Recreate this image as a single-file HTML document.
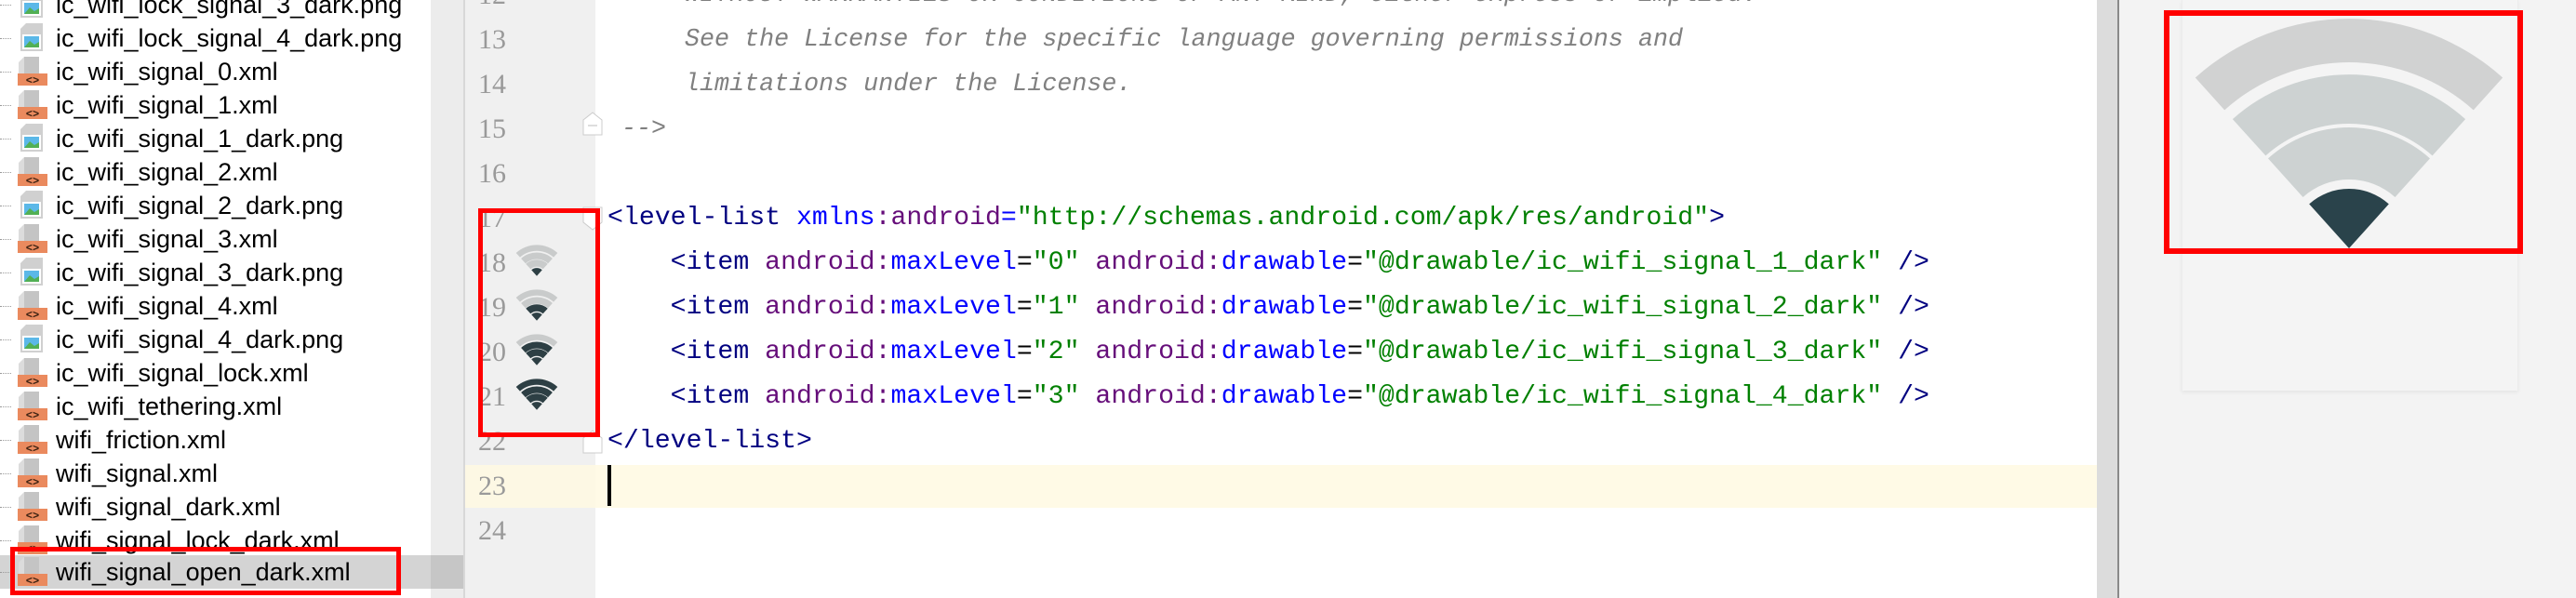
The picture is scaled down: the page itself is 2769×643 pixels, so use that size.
<!DOCTYPE html>
<html><head><meta charset="utf-8"><style>
*{margin:0;padding:0;box-sizing:border-box}
body{width:2769px;height:643px;overflow:hidden;background:#fff;position:relative;font-family:"Liberation Sans","Noto Sans CJK SC",sans-serif}
.a{position:absolute}
.row{position:absolute;left:0;width:463px;height:36px}
.row .t{position:absolute;left:60px;top:0;line-height:36px;font-size:27px;color:#000;white-space:nowrap}
.row .d{position:absolute;left:0;top:18px;width:12px;border-top:1px dotted #999}
.row svg{position:absolute;left:18px;top:2px}
.ln{position:absolute;left:500px;width:44px;text-align:right;font-family:"Liberation Serif",serif;font-size:30px;color:#9a9a9a;height:48px;line-height:48px}
.code{position:absolute;left:653px;height:48px;line-height:48px;font-family:"Liberation Mono",monospace;font-size:28.2px;white-space:pre;color:#000}
.c{color:#808080;font-style:italic;font-size:26.7px}
.tg{color:#000080}.an{color:#0000ff}.ns{color:#660e7a}.v{color:#008000}
</style></head><body>
<svg width="0" height="0" style="position:absolute"><defs>
<symbol id="xi" viewBox="0 0 34 32"><path d="M8 0H24V18H8Z" fill="#c4c4c4"/><path d="M8 0L2 6V18H8Z" fill="#dcdcdc"/><rect x="1" y="18" width="32" height="13" fill="#ea8a5e"/><text x="17" y="29" font-size="12" font-family="Liberation Mono" text-anchor="middle" fill="#3a2010" font-weight="bold">&lt;&gt;</text></symbol>
<symbol id="pi" viewBox="0 0 34 32"><path d="M10 0H28V30H4V6Z" fill="#d0d0d0"/><rect x="6" y="12" width="20" height="16" fill="#fff"/><rect x="8" y="14" width="16" height="12" fill="#5bb8e8"/><path d="M8 26L14 19L19 23L24 20V26Z" fill="#52b054"/></symbol>
</defs></svg>

<div class="a" style="left:0;top:597px;width:463px;height:36px;background:#d4d4d4"></div>
<div class="a" style="left:463px;top:0;width:37px;height:643px;background:#ececec"></div>
<div class="a" style="left:463px;top:597px;width:37px;height:36px;background:#c6c6c6"></div>
<div class="a" style="left:498px;top:0;width:2px;height:643px;background:#d8d8d8"></div>

<div class="row" style="top:-13px"><div class="d"></div><svg width="34" height="32"><use href="#pi"/></svg><div class="t">ic_wifi_lock_signal_3_dark.png</div></div>
<div class="row" style="top:23px"><div class="d"></div><svg width="34" height="32"><use href="#pi"/></svg><div class="t">ic_wifi_lock_signal_4_dark.png</div></div>
<div class="row" style="top:59px"><div class="d"></div><svg width="34" height="32"><use href="#xi"/></svg><div class="t">ic_wifi_signal_0.xml</div></div>
<div class="row" style="top:95px"><div class="d"></div><svg width="34" height="32"><use href="#xi"/></svg><div class="t">ic_wifi_signal_1.xml</div></div>
<div class="row" style="top:131px"><div class="d"></div><svg width="34" height="32"><use href="#pi"/></svg><div class="t">ic_wifi_signal_1_dark.png</div></div>
<div class="row" style="top:167px"><div class="d"></div><svg width="34" height="32"><use href="#xi"/></svg><div class="t">ic_wifi_signal_2.xml</div></div>
<div class="row" style="top:203px"><div class="d"></div><svg width="34" height="32"><use href="#pi"/></svg><div class="t">ic_wifi_signal_2_dark.png</div></div>
<div class="row" style="top:239px"><div class="d"></div><svg width="34" height="32"><use href="#xi"/></svg><div class="t">ic_wifi_signal_3.xml</div></div>
<div class="row" style="top:275px"><div class="d"></div><svg width="34" height="32"><use href="#pi"/></svg><div class="t">ic_wifi_signal_3_dark.png</div></div>
<div class="row" style="top:311px"><div class="d"></div><svg width="34" height="32"><use href="#xi"/></svg><div class="t">ic_wifi_signal_4.xml</div></div>
<div class="row" style="top:347px"><div class="d"></div><svg width="34" height="32"><use href="#pi"/></svg><div class="t">ic_wifi_signal_4_dark.png</div></div>
<div class="row" style="top:383px"><div class="d"></div><svg width="34" height="32"><use href="#xi"/></svg><div class="t">ic_wifi_signal_lock.xml</div></div>
<div class="row" style="top:419px"><div class="d"></div><svg width="34" height="32"><use href="#xi"/></svg><div class="t">ic_wifi_tethering.xml</div></div>
<div class="row" style="top:455px"><div class="d"></div><svg width="34" height="32"><use href="#xi"/></svg><div class="t">wifi_friction.xml</div></div>
<div class="row" style="top:491px"><div class="d"></div><svg width="34" height="32"><use href="#xi"/></svg><div class="t">wifi_signal.xml</div></div>
<div class="row" style="top:527px"><div class="d"></div><svg width="34" height="32"><use href="#xi"/></svg><div class="t">wifi_signal_dark.xml</div></div>
<div class="row" style="top:563px"><div class="d"></div><svg width="34" height="32"><use href="#xi"/></svg><div class="t">wifi_signal_lock_dark.xml</div></div>
<div class="row" style="top:597px"><div class="d"></div><svg width="34" height="32"><use href="#xi"/></svg><div class="t">wifi_signal_open_dark.xml</div></div>
<div class="a" style="left:11px;top:588px;width:420px;height:52px;border:5px solid #f00"></div>

<div class="a" style="left:500px;top:0;width:140px;height:643px;background:#f0f0f0"></div>
<div class="a" style="left:500px;top:500px;width:140px;height:46px;background:#fdf8e4"></div>
<div class="a" style="left:640px;top:500px;width:1635px;height:46px;background:#fffae6"></div>
<div class="a" style="left:2275px;top:0;width:1px;height:643px;background:#eee"></div>

<div class="ln" style="top:-29px">12</div>
<div class="ln" style="top:19px">13</div>
<div class="ln" style="top:67px">14</div>
<div class="ln" style="top:115px">15</div>
<div class="ln" style="top:163px">16</div>
<div class="ln" style="top:211px">17</div>
<div class="ln" style="top:259px">18</div>
<div class="ln" style="top:307px">19</div>
<div class="ln" style="top:355px">20</div>
<div class="ln" style="top:403px">21</div>
<div class="ln" style="top:451px">22</div>
<div class="ln" style="top:499px">23</div>
<div class="ln" style="top:547px">24</div>

<svg class="a" style="left:626px;top:120px" width="22" height="26"><path d="M1 25V9L11 1L21 9V25Z" fill="#fff" stroke="#ccc"/><path d="M6 15H16" stroke="#bbb"/></svg>
<svg class="a" style="left:626px;top:222px" width="22" height="26"><path d="M1 1V17L11 25L21 17V1Z" fill="#fff" stroke="#ccc"/></svg>
<svg class="a" style="left:626px;top:462px" width="22" height="26"><path d="M1 25V9L11 1L21 9V25Z" fill="#fff" stroke="#ccc"/></svg>

<svg class="a" style="left:554px;top:263px" width="46" height="34" viewBox="-170 -250 340 252">
<path d="M-165.2 -183.5A247 247 0 0 1 165.2 -183.5L133.8 -148.6A200 200 0 0 0 -133.8 -148.6Z" fill="#c9cbcb"/>
<path d="M-125.1 -138.9A187 187 0 0 1 125.1 -138.9L89.6 -99.6A134 134 0 0 0 -89.6 -99.6Z" fill="#c9cbcb"/>
<path d="M-87 -96.6A130 130 0 0 1 87 -96.6L49.5 -55A74 74 0 0 0 -49.5 -55Z" fill="#c9cbcb"/>
<path d="M0 0L-42.8 -47.6A64 64 0 0 1 42.8 -47.6Z" fill="#2d3f44"/></svg>
<svg class="a" style="left:554px;top:311px" width="46" height="34" viewBox="-170 -250 340 252">
<path d="M-165.2 -183.5A247 247 0 0 1 165.2 -183.5L133.8 -148.6A200 200 0 0 0 -133.8 -148.6Z" fill="#c9cbcb"/>
<path d="M-125.1 -138.9A187 187 0 0 1 125.1 -138.9L89.6 -99.6A134 134 0 0 0 -89.6 -99.6Z" fill="#c9cbcb"/>
<path d="M-87 -96.6A130 130 0 0 1 87 -96.6L49.5 -55A74 74 0 0 0 -49.5 -55Z" fill="#2d3f44"/>
<path d="M0 0L-42.8 -47.6A64 64 0 0 1 42.8 -47.6Z" fill="#2d3f44"/></svg>
<svg class="a" style="left:554px;top:359px" width="46" height="34" viewBox="-170 -250 340 252">
<path d="M-165.2 -183.5A247 247 0 0 1 165.2 -183.5L133.8 -148.6A200 200 0 0 0 -133.8 -148.6Z" fill="#c9cbcb"/>
<path d="M-125.1 -138.9A187 187 0 0 1 125.1 -138.9L89.6 -99.6A134 134 0 0 0 -89.6 -99.6Z" fill="#2d3f44"/>
<path d="M-87 -96.6A130 130 0 0 1 87 -96.6L49.5 -55A74 74 0 0 0 -49.5 -55Z" fill="#2d3f44"/>
<path d="M0 0L-42.8 -47.6A64 64 0 0 1 42.8 -47.6Z" fill="#2d3f44"/></svg>
<svg class="a" style="left:554px;top:407px" width="46" height="34" viewBox="-170 -250 340 252">
<path d="M-165.2 -183.5A247 247 0 0 1 165.2 -183.5L133.8 -148.6A200 200 0 0 0 -133.8 -148.6Z" fill="#2d3f44"/>
<path d="M-125.1 -138.9A187 187 0 0 1 125.1 -138.9L89.6 -99.6A134 134 0 0 0 -89.6 -99.6Z" fill="#2d3f44"/>
<path d="M-87 -96.6A130 130 0 0 1 87 -96.6L49.5 -55A74 74 0 0 0 -49.5 -55Z" fill="#2d3f44"/>
<path d="M0 0L-42.8 -47.6A64 64 0 0 1 42.8 -47.6Z" fill="#2d3f44"/></svg>
<div class="a" style="left:514px;top:224px;width:131px;height:246px;border:5px solid #f00"></div>

<div class="code c" style="top:-29px;left:736px">WITHOUT WARRANTIES OR CONDITIONS OF ANY KIND, either express or implied.</div>
<div class="code c" style="top:19px;left:736px">See the License for the specific language governing permissions and</div>
<div class="code c" style="top:67px;left:736px">limitations under the License.</div>
<div class="code c" style="top:115px;left:668px">--&gt;</div>
<div class="code" style="top:211px"><span class="tg">&lt;level-list</span> <span class="an">xmlns</span><span class="ns">:android</span><span class="an">=</span><span class="v">"http://schemas.android.com/apk/res/android"</span><span class="tg">&gt;</span></div>
<div class="code" style="top:259px">    <span class="tg">&lt;item</span> <span class="ns">android:</span><span class="an">maxLevel</span>=<span class="v">"0"</span> <span class="ns">android:</span><span class="an">drawable</span>=<span class="v">"@drawable/ic_wifi_signal_1_dark"</span> <span class="tg">/&gt;</span></div>
<div class="code" style="top:307px">    <span class="tg">&lt;item</span> <span class="ns">android:</span><span class="an">maxLevel</span>=<span class="v">"1"</span> <span class="ns">android:</span><span class="an">drawable</span>=<span class="v">"@drawable/ic_wifi_signal_2_dark"</span> <span class="tg">/&gt;</span></div>
<div class="code" style="top:355px">    <span class="tg">&lt;item</span> <span class="ns">android:</span><span class="an">maxLevel</span>=<span class="v">"2"</span> <span class="ns">android:</span><span class="an">drawable</span>=<span class="v">"@drawable/ic_wifi_signal_3_dark"</span> <span class="tg">/&gt;</span></div>
<div class="code" style="top:403px">    <span class="tg">&lt;item</span> <span class="ns">android:</span><span class="an">maxLevel</span>=<span class="v">"3"</span> <span class="ns">android:</span><span class="an">drawable</span>=<span class="v">"@drawable/ic_wifi_signal_4_dark"</span> <span class="tg">/&gt;</span></div>
<div class="code" style="top:451px"><span class="tg">&lt;/level-list&gt;</span></div>
<div class="a" style="left:653px;top:500px;width:4px;height:44px;background:#000"></div>

<div class="a" style="left:2254px;top:0;width:23px;height:643px;background:#dcdcdc"></div>
<div class="a" style="left:2276px;top:0;width:2px;height:643px;background:#8a8a8a"></div>
<div class="a" style="left:2278px;top:0;width:491px;height:643px;background:#f3f3f3"></div>
<div class="a" style="left:2345px;top:0;width:362px;height:420px;background:#f4f4f4;box-shadow:0 2px 4px rgba(0,0,0,0.06);border-left:1px solid #ececec;border-right:1px solid #ececec"></div>
<svg class="a" style="left:2355px;top:17px" width="340" height="252" viewBox="-170 -250 340 252">
<path d="M-165.2 -183.5A247 247 0 0 1 165.2 -183.5L133.8 -148.6A200 200 0 0 0 -133.8 -148.6Z" fill="#d1d2d2"/>
<path d="M-125.1 -138.9A187 187 0 0 1 125.1 -138.9L89.6 -99.6A134 134 0 0 0 -89.6 -99.6Z" fill="#cdd2d2"/>
<path d="M-87 -96.6A130 130 0 0 1 87 -96.6L49.5 -55A74 74 0 0 0 -49.5 -55Z" fill="#cdd2d2"/>
<path d="M0 0L-42.8 -47.6A64 64 0 0 1 42.8 -47.6Z" fill="#2a434b"/></svg>
<div class="a" style="left:2326px;top:11px;width:386px;height:262px;border:6px solid #f00"></div>
</body></html>
